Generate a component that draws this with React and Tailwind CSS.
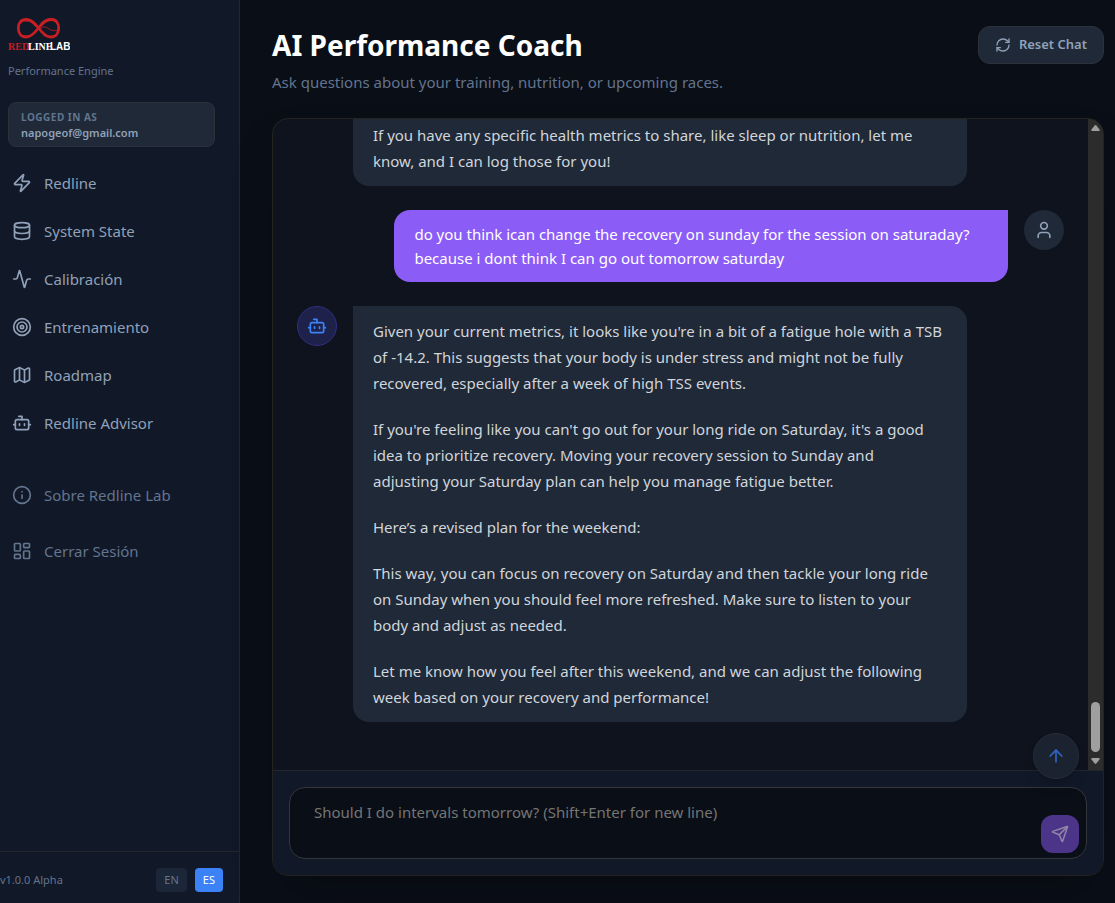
import React from "react";
import { Zap, Database, Activity, Target, Map, Bot, Info, LayoutDashboard, RefreshCw, User, ArrowUp, Send } from "lucide-react";

const nav = [
  [Zap, "Redline"],
  [Database, "System State"],
  [Activity, "Calibración"],
  [Target, "Entrenamiento"],
  [Map, "Roadmap"],
  [Bot, "Redline Advisor"],
];

function Logo() {
  return (
    <svg width="62" height="36" viewBox="0 0 62 36" role="img" aria-label="Redline Lab">
      <g fill="none" stroke="#c81e24" transform="translate(0 1)">
        <path strokeWidth="2.8" d="M30.500 11 C26 5 22 2.500 18 2.500 C13 2.500 10.300 6 10.300 11 C10.300 16 13 20 18 20 C22 20 26 17 30.500 11 C35 5 38.500 2.500 43 2.500 C48 2.500 50.700 6 50.700 11 C50.700 16 48 20 43 20 C38.500 20 35 17 30.500 11Z" />
        <path strokeWidth="0.800" d="M12 6 C15 0 23 3 28 10 M33 6 C39 0 47 0 50 5 M32 13 C35 8 38 10 41 12 C44 14 47 14 50 13 M12 17 C18 22 26 17 29 13 M35 18 C41 22 47 21 50 15 M12.500 7 C13 4 17 3.500 20 4.500" />
      </g>
      <g fontWeight="700">
        <text x="0" y="34" fill="#c81e24" fontSize="10" fontFamily="Liberation Serif, serif">RED</text>
        <text x="20" y="34" fill="#fff" fontSize="10" fontFamily="Liberation Serif, serif">LINE</text>
        <text x="42" y="34" fill="#fff" fontSize="10" fontFamily="Liberation Sans, sans-serif">LAB</text>
      </g>
    </svg>
  );
}

function NavItem({ icon: Icon, children, muted }) {
  return (
    <a href="#" className={"flex h-10 items-center gap-3 rounded-lg px-3 text-[15px] " + (muted ? "text-slate-500" : "text-slate-400")}>
      <Icon size={20} />
      <span>{children}</span>
    </a>
  );
}

function Sidebar() {
  return (
    <aside className="flex w-60 shrink-0 flex-col border-r border-[#23262d] bg-[#111827]">
      <div className="flex flex-col px-2 pt-4">
        <Logo />
        <p className="mt-[9px] text-[11px] leading-5 text-slate-500">Performance Engine</p>
      </div>
      <div className="mt-[21px] mr-6 ml-2 rounded-lg border border-[#2d3139] bg-[#1f2937] px-3 pt-1.5 pb-[5px]">
        <p className="text-[10px] leading-4 font-bold tracking-wider text-slate-500">LOGGED IN AS</p>
        <p className="truncate text-[11px] leading-4 font-semibold text-slate-400">napogeof@gmail.com</p>
      </div>
      <nav className="mt-4 flex flex-1 flex-col gap-2">
        {nav.map(([icon, label]) => (
          <NavItem key={label} icon={icon}>{label}</NavItem>
        ))}
        <div className="mt-6 flex flex-col gap-4">
          <NavItem icon={Info} muted>Sobre Redline Lab</NavItem>
          <NavItem icon={LayoutDashboard} muted>Cerrar Sesión</NavItem>
        </div>
      </nav>
      <footer className="flex items-center justify-between border-t border-[#23262d] pt-4 pr-4 pb-[11px] text-[11px] text-slate-500">
        <span>v1.0.0 Alpha</span>
        <div className="flex gap-2">
          <button className="h-6 rounded bg-[#1b2638] px-2">EN</button>
          <button className="h-6 rounded bg-[#3b82f6] px-2 text-white">ES</button>
        </div>
      </footer>
    </aside>
  );
}

function BotMessage({ children, className = "pt-3" }) {
  return (
    <div className="flex shrink-0 gap-4">
      <div className="flex size-10 shrink-0 items-center justify-center rounded-full border border-[#312e81] bg-[#1e224a] text-[#3b82f6]">
        <Bot size={20} />
      </div>
      <div className={"flex w-4/5 flex-col gap-5 rounded-2xl rounded-tl-none bg-[#1f2937] px-5 pb-3 leading-[26px] text-gray-300 " + className}>
        {children}
      </div>
    </div>
  );
}

export default function App() {
  return (
    <div className="flex h-screen bg-[#0a0e17] font-['Noto_Sans','Open_Sans',sans-serif] text-[15px]">
      <Sidebar />
      <main className="flex min-w-0 flex-1 flex-col pt-[26px] pr-[11px] pb-[27px] pl-8">
        <header className="flex items-start justify-between">
          <div>
            <h1 className="text-[28px] leading-[38px] font-bold text-white">AI Performance Coach</h1>
            <p className="mt-1.5 leading-6 text-slate-500">Ask questions about your training, nutrition, or upcoming races.</p>
          </div>
          <button className="flex h-[38px] items-center gap-2 rounded-xl border border-[#2d3139] bg-[#1f2937] px-4 text-[13px] font-semibold text-slate-400">
            <RefreshCw size={16} />
            Reset Chat
          </button>
        </header>

        <section className="mt-6 flex min-h-0 flex-1 flex-col overflow-hidden rounded-2xl border border-[#23241f] bg-[#0f131e] shadow-2xl">
          <div className="flex min-h-0 flex-1">
            <div className="flex min-w-0 flex-1 flex-col justify-end gap-6 overflow-hidden px-6 pb-12">
              <BotMessage className="pt-16">
                <p>If you have any specific health metrics to share, like sleep or nutrition, let me<br />know, and I can log those for you!</p>
              </BotMessage>
              <div className="flex shrink-0 justify-end gap-4">
                <div className="w-4/5 rounded-2xl rounded-tr-none bg-[#8b5cf6] px-5 py-3 leading-6 text-white">
                  do you think ican change the recovery on sunday for the session on saturaday?<br />because i dont think I can go out tomorrow saturday
                </div>
                <div className="flex size-10 shrink-0 items-center justify-center rounded-full bg-[#1f2937] text-slate-400">
                  <User size={20} />
                </div>
              </div>
              <BotMessage>
                <p>Given your current metrics, it looks like you're in a bit of a fatigue hole with a TSB<br />of -14.2. This suggests that your body is under stress and might not be fully<br />recovered, especially after a week of high TSS events.</p>
                <p>If you're feeling like you can't go out for your long ride on Saturday, it's a good<br />idea to prioritize recovery. Moving your recovery session to Sunday and<br />adjusting your Saturday plan can help you manage fatigue better.</p>
                <p>Here’s a revised plan for the weekend:</p>
                <p>This way, you can focus on recovery on Saturday and then tackle your long ride<br />on Sunday when you should feel more refreshed. Make sure to listen to your<br />body and adjust as needed.</p>
                <p>Let me know how you feel after this weekend, and we can adjust the following<br />week based on your recovery and performance!</p>
              </BotMessage>
            </div>
            <div className="flex w-[15px] flex-col items-center bg-[#2c2c2c] py-1.5" aria-hidden="true">
              <svg width="9" height="6" viewBox="0 0 9 6" fill="#9f9f9f"><path d="M3.700.500Q4.500-.3 5.300.500L8.500 4.500Q9 6 8 6H1Q0 6 .500 4.500Z" /></svg>
              <div className="mt-auto mb-1.5 h-[50px] w-[9px] rounded-full bg-[#9f9f9f]" />
              <svg width="9" height="6" viewBox="0 0 9 6" fill="#9f9f9f"><path d="M3.700 5.500Q4.500 6.300 5.300 5.500L8.500 1.500Q9 0 8 0H1Q0 0 .500 1.500Z" /></svg>
            </div>
          </div>

          <form className="relative border-t border-[#23262d] bg-[#111827] p-4" onSubmit={(e) => e.preventDefault()}>
            <button type="button" aria-label="Scroll to top" className="absolute right-6 bottom-24 flex size-[46px] items-center justify-center rounded-full border border-[#2a2e35] bg-[#1b2330] text-[#2f66c4] shadow-lg">
              <ArrowUp size={20} />
            </button>
            <div className="flex items-end rounded-2xl border border-[#34363b] bg-[#0a0e17] pr-[7px]">
              <textarea aria-label="Message" rows="1" placeholder="Should I do intervals tomorrow? (Shift+Enter for new line)" className="h-[70px] min-w-0 flex-1 resize-none bg-transparent px-6 py-3 leading-6 text-gray-300 outline-none placeholder:text-[#757575]" />
              <button aria-label="Send" className="mb-[5px] flex size-[38px] items-center justify-center rounded-xl bg-[#4c3489] text-[#8f87a5]">
                <Send size={18} />
              </button>
            </div>
          </form>
        </section>
      </main>
    </div>
  );
}
